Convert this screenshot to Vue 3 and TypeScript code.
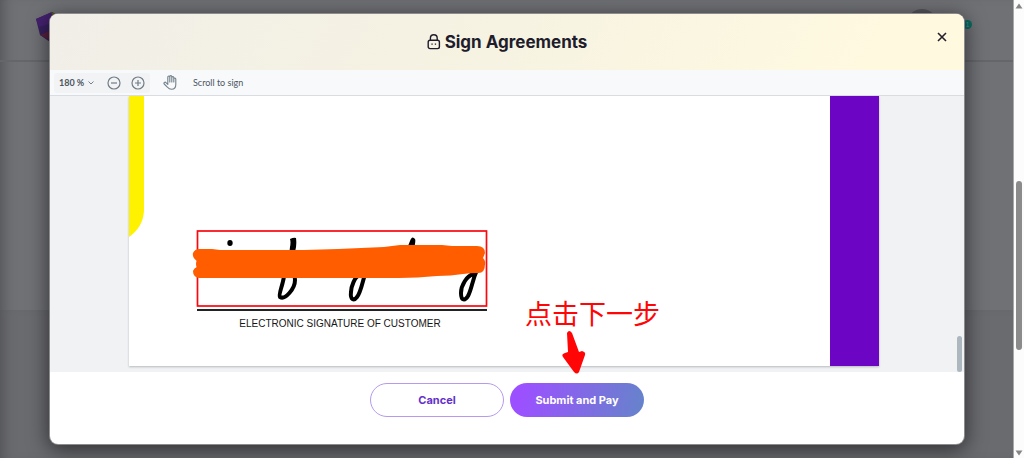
<script setup lang="ts">
import { ref } from 'vue'

const zoom = ref('180')
const levels: string[] = ['100', '125', '150', '180', '200']
</script>

<template>
  <div class="screen">
    <div class="site" aria-hidden="true">
      <div class="site-header">
        <svg class="logo" width="30" height="32" viewBox="0 0 30 32">
          <path d="M0 7 16 0 30 8 28 24 14 30 4 23Z" fill="#38205e" />
          <path d="M0 7 16 0 20 10 3 15Z" fill="#44216f" />
          <path d="M15 0 24 4 18 7Z" fill="#5d5a0b" />
          <path d="M4 23 16 18 18 30Z" fill="#59213f" />
        </svg>
        <span class="avatar"></span>
        <span class="badge">1</span>
      </div>
      <div class="site-body"></div>
      <div class="site-footer"></div>
    </div>
    <div class="page-scroll" aria-hidden="true">
      <svg width="8" height="6" viewBox="0 0 8 6"><path d="M4 0.5 7.5 5.5H0.5Z" fill="#858585" /></svg>
      <div class="track"><div class="thumb"></div></div>
      <svg width="8" height="6" viewBox="0 0 8 6"><path d="M4 5.5 7.5 0.5H0.5Z" fill="#858585" /></svg>
    </div>

    <div class="overlay">
      <section class="modal" role="dialog" aria-modal="true" aria-labelledby="dialog-title">
        <header class="modal-header">
          <svg width="14" height="16" viewBox="0 0 14 16" fill="none" stroke="#211c2c" stroke-width="1.4">
            <rect x="1.2" y="6.2" width="11.2" height="8.4" rx="1.8" />
            <path d="M3.4 6V4.2a3.4 3.4 0 0 1 6.8 0V6" />
            <path d="M4.4 10.2h1.3M7.8 10.2h1.3" stroke-width="1.3" />
          </svg>
          <h1 id="dialog-title">Sign Agreements</h1>
          <button class="close" type="button" aria-label="Close">
            <svg width="10" height="10" viewBox="0 0 10 10" stroke="#24202c" stroke-width="1.6"><path d="m1 1 8 8M9 1 1 9" /></svg>
          </button>
        </header>

        <div class="toolbar">
          <div class="zoom-group">
            <label class="zoom-label">
              <select v-model="zoom" aria-label="Zoom level">
                <option v-for="level in levels" :key="level" :value="level">{{ level }} %</option>
              </select>
              <svg width="6" height="4" viewBox="0 0 6 4" fill="none" stroke="#75808b"><path d="m.5.5 2.5 2.5L5.5.5" /></svg>
            </label>
            <button type="button" aria-label="Zoom out">
              <svg width="14" height="14" viewBox="0 0 14 14" fill="none" stroke="#717c87" stroke-width="1.2"><circle cx="7" cy="7" r="6" /><path d="M4 7h6" /></svg>
            </button>
            <button type="button" aria-label="Zoom in">
              <svg width="14" height="14" viewBox="0 0 14 14" fill="none" stroke="#717c87" stroke-width="1.2"><circle cx="7" cy="7" r="6" /><path d="M4 7h6M7 4v6" /></svg>
            </button>
          </div>
          <button class="hand" type="button" aria-label="Pan">
            <svg width="14" height="15" viewBox="0 0 14 15" fill="none" stroke="#74808b" stroke-width="1.1" stroke-linecap="round" stroke-linejoin="round">
              <path d="M4.800 9V2a1 1 0 0 1 2 0V7M6.800 3V1.600a1 1 0 0 1 2 0V7M8.800 2.600a1 1 0 0 1 2 0V7M10.800 4a1 1 0 0 1 2 0V9.600c0 2.900-1.600 4.700-4.200 4.700-1.800 0-3.100-.7-4-2L1.200 9C.4 7.600 2 6.500 3 7.700l1.800 1.700" />
            </svg>
          </button>
          <span class="hint">Scroll to sign</span>
        </div>

        <div class="viewer">
          <article class="paper">
            <svg class="yellow" width="15" height="141" viewBox="0 0 15 141"><path d="M0 0h15v115Q14 131 0 141Z" fill="#fff200" /></svg>
            <div class="paper-content">
              <figure class="signature">
                <svg width="296" height="80" viewBox="0 0 296 80" fill="none" role="img" aria-label="Signature">
                  <g fill="#000">
                    <ellipse cx="38" cy="14" rx="2.7" ry="3" />
                    <path d="M98 10q4-2 6-1 1 7-1 14l-2 12h-5l2-17q1-5 0-8Z" />
                    <path d="M211 36q2-13 7-24 2-6 5-2 1 2-1 9l-3 17Z" />
                  </g>
                  <g stroke="#000" stroke-linecap="round" stroke-linejoin="round">
                    <path d="M92 47c-1 9-6 19-4 21 5 3 15-8 15-17 0-5-2-8-4-7" stroke-width="4" />
                    <path d="M167 47c-4 0-8 11-8 16-1 8 3 9 6 5 4-5 5-14 9-26" stroke-width="4" />
                    <path d="M281 45c-6 2-12 11-12 19 0 8 4 8 7 3 4-8 4-15 9-26" stroke-width="4" />
                    <path d="m288 36 4-1" stroke-width="2" />
                  </g>
                  <rect x="5.5" y="2" width="289" height="75" stroke="#fb070e" stroke-width="1.7" />
                  <path d="M7 20h13l8 1h84l34-1 46-2 16-2h42l10 1h25q8 0 8 7-1 3-2 5 3 3 2 6 0 10-8 9-7 0-14 1-12 2-26 2-20 2-38 2H7q-6-1-6-7 1-3 4-4-2-3 0-6-5-3-4-8Q3 20 7 20Z" fill="#ff5d00" />
                </svg>
                <div class="sign-line"></div>
                <figcaption>ELECTRONIC SIGNATURE OF CUSTOMER</figcaption>
              </figure>
            </div>
            <div class="purple"></div>
          </article>
          <div class="viewer-thumb"></div>
        </div>

        <footer class="actions">
          <button class="action cancel" type="button">Cancel</button>
          <button class="action submit" type="button">Submit and Pay</button>
        </footer>

        <div class="annotation">
          <span>点击下一步</span>
          <svg width="26" height="46" viewBox="0 0 26 46">
            <path d="M6 4q2-4 5 0l7 19 3-1q4 1 3 4l-6 17q-2 3-5 0L2 28q-2-3 2-4l3-1Z" fill="#ff0505" />
          </svg>
        </div>
      </section>
    </div>
  </div>
</template>

<style>
html, body { background: #707175; overflow: hidden; }
</style>

<style scoped>
* { box-sizing: border-box; }
button, select { border: 0; padding: 0; background: none; font: inherit; color: inherit; }
button svg { display: block; }

.screen {
  position: relative;
  display: flex;
  height: 100vh;
  font-family: "Liberation Sans", sans-serif;
}
.site {
  flex: 1;
  display: flex;
  flex-direction: column;
  background: #707175;
  box-shadow: inset 12px 0 14px -10px #4f5053;
}
.site-header {
  position: relative;
  height: 62px;
  padding: 12px 36px;
  border-bottom: 2px solid #65666a;
}
.avatar {
  position: absolute;
  top: 9px;
  right: 75px;
  width: 32px;
  height: 32px;
  border-radius: 50%;
  background: #55565a;
}
.badge {
  position: absolute;
  top: 20px;
  right: 41px;
  width: 9px;
  height: 9px;
  border-radius: 50%;
  background: #086c62;
  color: #4c918a;
  font-size: 7px;
  line-height: 9px;
  text-align: center;
}
.site-body { flex: 248; }
.site-footer {
  flex: 148;
  background: #6a6b6f;
  box-shadow: inset 12px 0 14px -10px #4f5053;
}
.page-scroll {
  width: 11px;
  display: flex;
  flex-direction: column;
  align-items: center;
  padding: 3px 0 2px;
  background: #fcfcfc;
  border-left: 1px solid #a9a9ab;
}
.track {
  flex: 1;
  display: flex;
  flex-direction: column;
  padding: 172px 0 100px;
}
.thumb { flex: 1; width: 6px; border-radius: 3px; background: #8b8b8b; }

.overlay {
  position: absolute;
  inset: 0;
  display: flex;
  padding: 14px 60px 14px 50px;
}
.modal {
  position: relative;
  flex: 1;
  min-width: 0;
  display: flex;
  flex-direction: column;
  border-radius: 8px;
  background: #fff;
  box-shadow: 0 0 0 1px #8c8c8e, 0 4px 20px 2px rgba(0, 0, 0, .55);
}
.modal-header {
  position: relative;
  display: flex;
  align-items: center;
  justify-content: center;
  gap: 4px;
  height: 56px;
  border-radius: 8px 8px 0 0;
  background: linear-gradient(120deg, #f1eee8, #f6f3e2 50%, #fff9e0 90%);
  color: #211c2c;
}
h1 {
  margin: 0;
  font: 700 17px/24px Inter, sans-serif;
}
.close {
  position: absolute;
  top: 18px;
  right: 17px;
}
.toolbar {
  display: flex;
  align-items: center;
  height: 26px;
  padding-left: 4px;
  background: #f7f9fb;
  border-bottom: 1px solid #d9dce0;
  color: #4d565f;
  font: 400 9px/14px Lato, sans-serif;
}
.zoom-group {
  display: flex;
  align-items: center;
  gap: 10px;
  height: 20px;
  padding: 0 5px;
  border-radius: 3px;
  background: #f1f3f5;
}
.zoom-label {
  display: flex;
  align-items: center;
  width: 38px;
  gap: 3px;
  font-weight: 700;
}
select { appearance: none; outline: none; }
.hand { margin: 0 16px 0 13px; }

.viewer {
  position: relative;
  flex: 1;
  display: flex;
  padding: 0 85px 6px 79px;
  background: #f0f2f4;
}
.paper {
  flex: 1;
  display: flex;
  background: #fff;
  box-shadow: 0 1px 2px #b7babd;
  clip-path: inset(0 -3px -4px -3px);
}
.yellow { flex: none; }
.purple { width: 49px; background: #6c05c4; }
.paper-content { flex: 1; padding: 133px 0 0 48px; }
.signature { width: 296px; margin: 0; }
.signature svg { display: block; overflow: visible; }
.sign-line {
  height: 2px;
  margin: 0 1px 0 5px;
  background: #222;
}
figcaption {
  margin-top: 6px;
  color: #161616;
  font-size: 10px;
  line-height: 14px;
  text-align: center;
  white-space: nowrap;
}
.viewer-thumb {
  position: absolute;
  right: 2px;
  bottom: 0;
  width: 5px;
  height: 36px;
  border-radius: 3px;
  background: #adb7c0;
}
.actions {
  display: flex;
  justify-content: center;
  gap: 6px;
  height: 72px;
  padding-top: 11px;
}
.action {
  width: 134px;
  height: 34px;
  border-radius: 17px;
  font: 700 11px/16px Inter, sans-serif;
}
.cancel { border: 1px solid #b79aec; color: #6430cb; }
.submit { background: linear-gradient(100deg, #9b51ff 10%, #6584ca); color: #fff; }
.annotation {
  position: absolute;
  left: calc(50% + 18px);
  bottom: 69px;
  display: flex;
  flex-direction: column;
  color: #ff0505;
  font: 400 27px/32px "Noto Sans CJK SC", sans-serif;
  white-space: nowrap;
}
.annotation svg { margin-left: 36px; }
</style>
